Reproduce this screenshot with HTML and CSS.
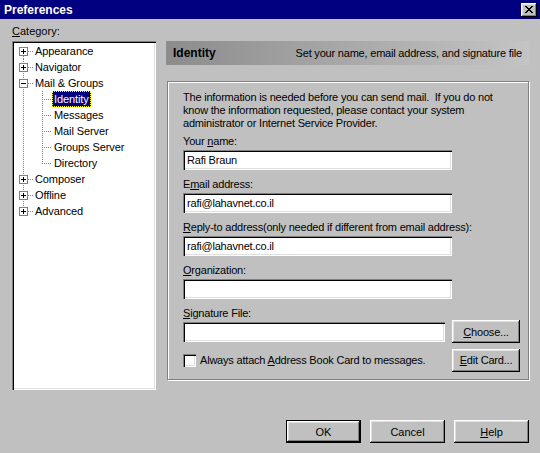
FILE: index.html
```html
<!DOCTYPE html>
<html>
<head>
<meta charset="utf-8">
<title>Preferences</title>
<link rel="stylesheet" href="styles.css">
</head>
<body>
<div class="window">
  <div class="titlebar">
    <span class="title">Preferences</span>
    <span class="close-btn">
      <svg width="8" height="7" viewBox="0 0 8 7" shape-rendering="crispEdges">
        <g fill="#000">
          <rect x="0" y="0" width="2" height="1"/><rect x="6" y="0" width="2" height="1"/>
          <rect x="1" y="1" width="2" height="1"/><rect x="5" y="1" width="2" height="1"/>
          <rect x="2" y="2" width="4" height="1"/>
          <rect x="3" y="3" width="2" height="1"/>
          <rect x="2" y="4" width="4" height="1"/>
          <rect x="1" y="5" width="2" height="1"/><rect x="5" y="5" width="2" height="1"/>
          <rect x="0" y="6" width="2" height="1"/><rect x="6" y="6" width="2" height="1"/>
        </g>
      </svg>
    </span>
  </div>

  <div class="content">
    <div class="left">
      <div class="cat-label"><u>C</u>ategory:</div>
      <div class="tree">
        <div class="row">
          <svg class="gut" width="19" height="16" shape-rendering="crispEdges">
            <line x1="9.5" y1="9" x2="9.5" y2="16" class="dot"/>
            <line x1="14" y1="8.5" x2="19" y2="8.5" class="dot"/>
            <rect x="5.5" y="4.5" width="8" height="8" class="box"/>
            <line x1="7" y1="8.5" x2="12" y2="8.5" class="sign"/>
            <line x1="9.5" y1="6" x2="9.5" y2="11" class="sign"/>
          </svg>
          <span class="lbl">Appearance</span>
        </div>
        <div class="row">
          <svg class="gut" width="19" height="16" shape-rendering="crispEdges">
            <line x1="9.5" y1="0" x2="9.5" y2="16" class="dot"/>
            <line x1="14" y1="8.5" x2="19" y2="8.5" class="dot"/>
            <rect x="5.5" y="4.5" width="8" height="8" class="box"/>
            <line x1="7" y1="8.5" x2="12" y2="8.5" class="sign"/>
            <line x1="9.5" y1="6" x2="9.5" y2="11" class="sign"/>
          </svg>
          <span class="lbl">Navigator</span>
        </div>
        <div class="row">
          <svg class="gut" width="19" height="16" shape-rendering="crispEdges">
            <line x1="9.5" y1="0" x2="9.5" y2="16" class="dot"/>
            <line x1="14" y1="8.5" x2="19" y2="8.5" class="dot"/>
            <rect x="5.5" y="4.5" width="8" height="8" class="box"/>
            <line x1="7" y1="8.5" x2="12" y2="8.5" class="sign"/>
          </svg>
          <span class="lbl">Mail &amp; Groups</span>
        </div>
        <div class="row">
          <svg class="gut" width="38" height="16" shape-rendering="crispEdges">
            <line x1="9.5" y1="0" x2="9.5" y2="16" class="dot"/>
            <line x1="28.5" y1="0" x2="28.5" y2="16" class="dot"/>
            <line x1="30" y1="8.5" x2="38" y2="8.5" class="dot"/>
          </svg>
          <span class="lbl selected">Identity</span>
        </div>
        <div class="row">
          <svg class="gut" width="38" height="16" shape-rendering="crispEdges">
            <line x1="9.5" y1="0" x2="9.5" y2="16" class="dot"/>
            <line x1="28.5" y1="0" x2="28.5" y2="16" class="dot"/>
            <line x1="30" y1="8.5" x2="38" y2="8.5" class="dot"/>
          </svg>
          <span class="lbl">Messages</span>
        </div>
        <div class="row">
          <svg class="gut" width="38" height="16" shape-rendering="crispEdges">
            <line x1="9.5" y1="0" x2="9.5" y2="16" class="dot"/>
            <line x1="28.5" y1="0" x2="28.5" y2="16" class="dot"/>
            <line x1="30" y1="8.5" x2="38" y2="8.5" class="dot"/>
          </svg>
          <span class="lbl">Mail Server</span>
        </div>
        <div class="row">
          <svg class="gut" width="38" height="16" shape-rendering="crispEdges">
            <line x1="9.5" y1="0" x2="9.5" y2="16" class="dot"/>
            <line x1="28.5" y1="0" x2="28.5" y2="16" class="dot"/>
            <line x1="30" y1="8.5" x2="38" y2="8.5" class="dot"/>
          </svg>
          <span class="lbl">Groups Server</span>
        </div>
        <div class="row">
          <svg class="gut" width="38" height="16" shape-rendering="crispEdges">
            <line x1="9.5" y1="0" x2="9.5" y2="16" class="dot"/>
            <line x1="28.5" y1="0" x2="28.5" y2="9" class="dot"/>
            <line x1="30" y1="8.5" x2="38" y2="8.5" class="dot"/>
          </svg>
          <span class="lbl">Directory</span>
        </div>
        <div class="row">
          <svg class="gut" width="19" height="16" shape-rendering="crispEdges">
            <line x1="9.5" y1="0" x2="9.5" y2="16" class="dot"/>
            <line x1="14" y1="8.5" x2="19" y2="8.5" class="dot"/>
            <rect x="5.5" y="4.5" width="8" height="8" class="box"/>
            <line x1="7" y1="8.5" x2="12" y2="8.5" class="sign"/>
            <line x1="9.5" y1="6" x2="9.5" y2="11" class="sign"/>
          </svg>
          <span class="lbl">Composer</span>
        </div>
        <div class="row">
          <svg class="gut" width="19" height="16" shape-rendering="crispEdges">
            <line x1="9.5" y1="0" x2="9.5" y2="16" class="dot"/>
            <line x1="14" y1="8.5" x2="19" y2="8.5" class="dot"/>
            <rect x="5.5" y="4.5" width="8" height="8" class="box"/>
            <line x1="7" y1="8.5" x2="12" y2="8.5" class="sign"/>
            <line x1="9.5" y1="6" x2="9.5" y2="11" class="sign"/>
          </svg>
          <span class="lbl">Offline</span>
        </div>
        <div class="row">
          <svg class="gut" width="19" height="16" shape-rendering="crispEdges">
            <line x1="9.5" y1="0" x2="9.5" y2="8" class="dot"/>
            <line x1="14" y1="8.5" x2="19" y2="8.5" class="dot"/>
            <rect x="5.5" y="4.5" width="8" height="8" class="box"/>
            <line x1="7" y1="8.5" x2="12" y2="8.5" class="sign"/>
            <line x1="9.5" y1="6" x2="9.5" y2="11" class="sign"/>
          </svg>
          <span class="lbl">Advanced</span>
        </div>
      </div>
    </div>

    <div class="right">
      <div class="banner">
        <span class="banner-title">Identity</span>
        <span class="banner-sub">Set your name, email address, and signature file</span>
      </div>
      <div class="group">
        <p class="intro">The information is needed before you can send mail.&nbsp; If you do not<br>know the information requested, please contact your system<br>administrator or Internet Service Provider.</p>

        <div class="field first">
          <div class="flabel">Your <u>n</u>ame:</div>
          <input class="text" type="text" value="Rafi Braun">
        </div>
        <div class="field">
          <div class="flabel">E<u>m</u>ail address:</div>
          <input class="text" type="text" value="rafi@lahavnet.co.il">
        </div>
        <div class="field">
          <div class="flabel"><u>R</u>eply-to address(only needed if different from email address):</div>
          <input class="text" type="text" value="rafi@lahavnet.co.il">
        </div>
        <div class="field">
          <div class="flabel"><u>O</u>rganization:</div>
          <input class="text" type="text" value="">
        </div>
        <div class="field">
          <div class="flabel"><u>S</u>ignature File:</div>
          <div class="sig-row">
            <input class="text sig" type="text" value="">
            <button class="btn side"><u>C</u>hoose...</button>
          </div>
        </div>
        <div class="edit-row">
          <span class="check"></span>
          <span class="check-label">Always attach <u>A</u>ddress Book Card to messages.</span>
          <button class="btn side push"><u>E</u>dit Card...</button>
        </div>
      </div>
    </div>
  </div>

  <div class="footer">
    <button class="btn dlg default">OK</button>
    <button class="btn dlg">Cancel</button>
    <button class="btn dlg"><u>H</u>elp</button>
  </div>
</div>
</body>
</html>
```

FILE: styles.css
```css
* { box-sizing: border-box; }

html, body {
  margin: 0;
  padding: 0;
}

body {
  width: 540px;
  height: 453px;
  overflow: hidden;
  background: #c0c0c0;
  font-family: "Liberation Sans", Arial, sans-serif;
  font-size: 11px;
  color: #000;
}

.window {
  width: 540px;
  height: 453px;
  background: #c0c0c0;
}

.titlebar {
  height: 19px;
  background: #000080;
  color: #fff;
  display: flex;
  align-items: center;
  justify-content: space-between;
  padding: 0 3px 0 4px;
}

.title {
  font-weight: bold;
  font-size: 12px;
  line-height: 14px;
}

.close-btn {
  width: 16px;
  height: 14px;
  background: #c0c0c0;
  display: flex;
  align-items: center;
  justify-content: center;
  padding-right: 1px;
  box-shadow: inset -1px -1px #000, inset 1px 1px #fff, inset -2px -2px #808080, inset 2px 2px #dfdfdf;
}

.close-btn svg { display: block; }

.content {
  display: flex;
  gap: 10px;
  padding: 6px 0 0 12px;
}

.left {
  width: 144px;
}

.cat-label {
  line-height: 13px;
  height: 13px;
}

.tree {
  margin-top: 3px;
  height: 349px;
  background: #fff;
  padding: 2px;
  box-shadow: inset 1px 1px #808080, inset 2px 2px #000, inset -1px -1px #fff, inset -2px -2px #dfdfdf;
}

.row {
  display: flex;
  height: 16px;
  align-items: stretch;
}

.gut { display: block; flex: none; }

.dot {
  stroke: #808080;
  stroke-width: 1;
  stroke-dasharray: 1 1;
}

.box {
  fill: #fff;
  stroke: #808080;
  stroke-width: 1;
}

.sign {
  stroke: #000;
  stroke-width: 1;
}

.lbl {
  line-height: 16px;
  padding: 0 2px;
  white-space: nowrap;
  letter-spacing: -0.1px;
}

.lbl.selected {
  background: #000080;
  color: #fff;
  outline: 1px dotted #ffff00;
  outline-offset: -1px;
}

.right {
  width: 364px;
  padding-top: 16px;
  letter-spacing: -0.2px;
}

.banner {
  height: 24px;
  display: flex;
  align-items: center;
  justify-content: space-between;
  padding: 0 8px 0 7px;
  background: linear-gradient(to right, #8c8c8c 0%, #a6a6a6 45%, #c4c4c4 100%);
}

.banner-title {
  font-weight: bold;
  font-size: 12px;
  letter-spacing: 0;
}

.banner-sub {
  white-space: nowrap;
}

.group {
  margin: 16px 0 0 1px;
  width: 362px;
  height: 299px;
  border: 1px solid #808080;
  box-shadow: inset 1px 1px #fff, 1px 1px #fff;
  padding: 9px 0 0 15px;
}

.intro {
  margin: 0;
  line-height: 13px;
  white-space: nowrap;
}

.field { margin-top: 8px; }
.field.first { margin-top: 5px; }

.flabel {
  line-height: 13px;
  height: 13px;
  margin-bottom: 2px;
  white-space: nowrap;
}

.text {
  display: block;
  width: 269px;
  height: 20px;
  margin: 0;
  border: 0;
  outline: none;
  padding: 0 4px;
  background: #fff;
  font: inherit;
  letter-spacing: inherit;
  color: #000;
  box-shadow: inset 1px 1px #808080, inset 2px 2px #000, inset -1px -1px #fff, inset -2px -2px #dfdfdf;
}

.sig-row {
  display: flex;
  align-items: center;
  gap: 7px;
  margin-top: -2px;
  height: 23px;
}

.text.sig { width: 262px; }

.btn {
  font: inherit;
  letter-spacing: inherit;
  color: #000;
  margin: 0;
  padding: 0;
  border: 0;
  background: #c0c0c0;
  height: 23px;
  box-shadow: inset -1px -1px #000, inset 1px 1px #fff, inset -2px -2px #808080, inset 2px 2px #dfdfdf;
}

.btn.side { width: 68px; flex: none; }

.edit-row {
  display: flex;
  align-items: center;
  width: 337px;
  height: 24px;
  margin-top: 5px;
}

.check {
  width: 13px;
  height: 13px;
  background: #fff;
  flex: none;
  box-shadow: inset 1px 1px #808080, inset 2px 2px #000, inset -1px -1px #fff, inset -2px -2px #dfdfdf;
}

.check-label {
  margin-left: 4px;
  white-space: nowrap;
}

.push { margin-left: auto; }

.footer {
  display: flex;
  justify-content: flex-end;
  gap: 9px;
  padding: 30px 11px 0 0;
}

.btn.dlg { width: 75px; }

.btn.default {
  border: 1px solid #000;
}
```
